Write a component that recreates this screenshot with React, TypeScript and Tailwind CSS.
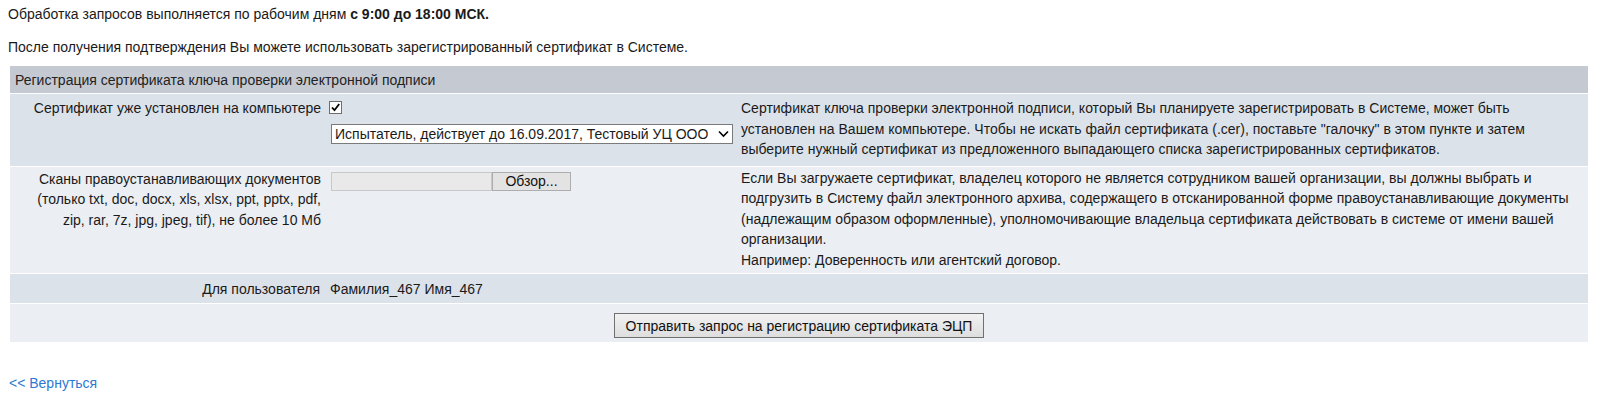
import React from "react";

const Check = () => (
  <div className="w-[13px] h-[13px] border border-[#6d6d6d] bg-white flex items-center justify-center">
    <svg width="11" height="11" viewBox="0 0 11 11">
      <path d="M2 5.5 L4.5 8.2 L9.2 2" stroke="#000" strokeWidth="1.8" fill="none" />
    </svg>
  </div>
);

export default function App() {
  return (
    <div
      className="text-[14px] leading-[20px] text-[#1a1a1a] bg-white min-h-[395px]"
      style={{ fontFamily: '"Liberation Sans", Arial, sans-serif' }}
    >
      <div className="pl-[8px] pt-[4px]">
        Обработка запросов выполняется по рабочим дням <b>с 9:00 до 18:00 МСК.</b>
      </div>
      <div className="pl-[8px] mt-[13px]">
        После получения подтверждения Вы можете использовать зарегистрированный сертификат в Системе.
      </div>

      <div className="ml-[10px] mr-[9px] mt-[9px] flex flex-col gap-px">
        <div className="bg-[#c5cad2] h-[27px] flex items-center pl-[5px] text-[#222]">
          Регистрация сертификата ключа проверки электронной подписи
        </div>

        {/* row 1 */}
        <div className="bg-[#dce2ea] grid grid-cols-[315px_412px_1fr] pt-[4px] pb-[6px]">
          <div className="text-right pr-[4px]">Сертификат уже установлен на компьютере</div>
          <div className="pl-[6px] flex flex-col">
            <div className="pt-[3px] h-[22px] -ml-[2px]">
              <Check />
            </div>
            <div className="mt-[4px] w-[402px] h-[20px] bg-white border border-[#7a7a7a] flex items-center justify-between pl-[3px] pr-[3px] leading-[18px]">
              <span className="whitespace-nowrap overflow-hidden">Испытатель, действует до 16.09.2017, Тестовый УЦ ООО</span>
              <svg width="11" height="8" viewBox="0 0 11 8" className="shrink-0 ml-[2px]">
                <path d="M1 1.5 L5.5 6 L10 1.5" stroke="#000" strokeWidth="1.6" fill="none" />
              </svg>
            </div>
          </div>
          <div className="pl-[4px] pr-[10px] leading-[20.5px]">
            Сертификат ключа проверки электронной подписи, который Вы планируете зарегистрировать в Системе, может быть
            установлен на Вашем компьютере. Чтобы не искать файл сертификата (.cer), поставьте "галочку" в этом пункте и затем
            выберите нужный сертификат из предложенного выпадающего списка зарегистрированных сертификатов.
          </div>
        </div>

        {/* row 2 */}
        <div className="bg-[#ebeef2] grid grid-cols-[315px_412px_1fr] pt-[1px] pb-[3px]">
          <div className="text-right pr-[4px] leading-[20.5px] pt-[1px]">
            Сканы правоустанавливающих документов
            <br />
            (только txt, doc, docx, xls, xlsx, ppt, pptx, pdf,
            <br />
            zip, rar, 7z, jpg, jpeg, tif), не более 10 Мб
          </div>
          <div className="pl-[6px] pt-[4px]">
            <div className="flex h-[19px]">
              <div className="w-[161px] bg-[#e9e9e9] border border-[#c8c8c8]" />
              <div className="w-[79px] bg-[#e3e3e3] border border-[#adadad] flex items-center justify-center leading-[17px] text-[#111]">
                Обзор...
              </div>
            </div>
          </div>
          <div className="pl-[4px] pr-[10px] leading-[20.5px]">
            Если Вы загружаете сертификат, владелец которого не является сотрудником вашей организации, вы должны выбрать и
            подгрузить в Систему файл электронного архива, содержащего в отсканированной форме правоустанавливающие документы
            (надлежащим образом оформленные), уполномочивающие владельца сертификата действовать в системе от имени вашей
            организации.
            <br />
            Например: Доверенность или агентский договор.
          </div>
        </div>

        {/* row 3 */}
        <div className="bg-[#dce2ea] grid grid-cols-[315px_1fr] h-[29px] items-center">
          <div className="text-right pr-[5px]">Для пользователя</div>
          <div className="pl-[5px]">Фамилия_467 Имя_467</div>
        </div>

        {/* row 4 */}
        <div className="bg-[#ebeef2] h-[38px] flex justify-center pt-[9px]">
          <div className="h-[25px] px-[11px] border border-[#707070] bg-gradient-to-b from-[#f2f2f2] to-[#dedede] flex items-center leading-[18px] text-[#111]">
            Отправить запрос на регистрацию сертификата ЭЦП
          </div>
        </div>
      </div>

      <div className="pl-[9px] mt-[31px] text-[#2d7ad0]">&lt;&lt; Вернуться</div>
    </div>
  );
}
